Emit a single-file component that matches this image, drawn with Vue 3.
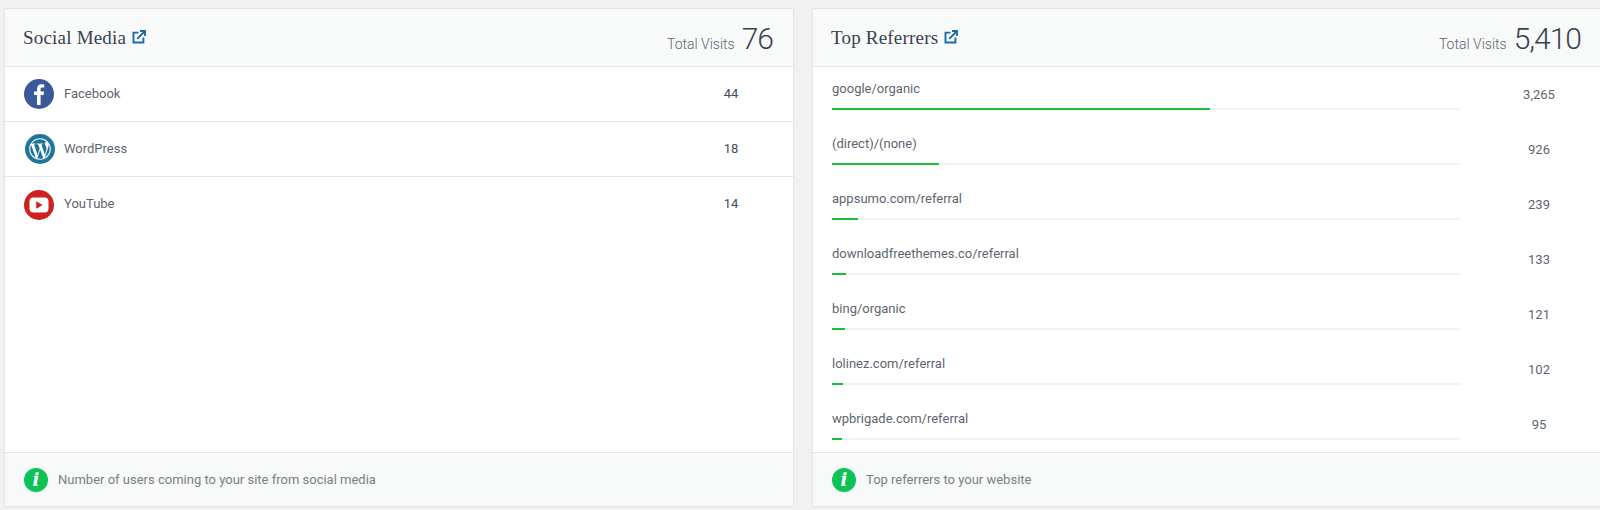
<template>
  <div class="page">
    <div class="card">
      <div class="card-head">
        <div class="title">
          <span>Social Media</span>
          <svg class="ext" viewBox="0 0 14 14" width="14" height="14">
            <path d="M6.5 2.6H1.5v9.9h9.9V7.5" fill="none" stroke="#1a6ca8" stroke-width="1.9" />
            <path d="M5.2 8.8 12 2M8 1h5v5" fill="none" stroke="#1a6ca8" stroke-width="1.9" />
          </svg>
        </div>
        <div class="total"><span class="total-label">Total Visits</span><span class="total-num">76</span></div>
      </div>
      <div class="card-body">
        <div class="social-row" v-for="s in socials" :key="s.name">
          <svg v-if="s.name === 'Facebook'" class="social-icon" viewBox="0 0 30 30" width="30" height="30">
            <circle cx="15" cy="15" r="15" fill="#3b5998" />
            <path d="M16.6 26v-10h3l.45-3.5H16.6v-2.2c0-1 .3-1.7 1.75-1.7h1.85V5.5c-.3 0-1.4-.15-2.7-.15-2.7 0-4.5 1.65-4.5 4.65v2.5H10v3.5h3v10z" fill="#fff" />
          </svg>
          <svg v-else-if="s.name === 'WordPress'" class="social-icon wp" viewBox="0 0 30 30" width="30" height="30">
            <circle cx="15" cy="15" r="15" fill="#21759b" />
            <path transform="translate(4.2 4.2) scale(.9)" fill="#fff" d="M21.469 6.825c.84 1.537 1.318 3.3 1.318 5.175 0 3.979-2.156 7.456-5.363 9.325l3.295-9.527c.615-1.54.82-2.771.82-3.864 0-.405-.026-.78-.07-1.11m-7.981.105c.647-.03 1.232-.105 1.232-.105.582-.075.514-.93-.067-.899 0 0-1.755.135-2.88.135-1.064 0-2.85-.15-2.85-.15-.585-.03-.661.855-.075.885 0 0 .54.061 1.125.09l1.68 4.605-2.37 7.08L5.354 6.9c.649-.03 1.234-.1 1.234-.1.585-.075.516-.93-.065-.896 0 0-1.746.138-2.874.138-.2 0-.438-.008-.69-.015C4.911 3.15 8.235 1.215 12 1.215c2.809 0 5.365 1.072 7.286 2.833-.046-.003-.091-.009-.141-.009-1.06 0-1.812.923-1.812 1.914 0 .89.513 1.643 1.06 2.531.411.72.89 1.643.89 2.977 0 .915-.354 1.994-.821 3.479l-1.075 3.585-3.9-11.61.001.014zM12 22.784c-1.059 0-2.081-.153-3.048-.437l3.237-9.406 3.315 9.087c.024.053.05.101.078.149-1.12.393-2.325.609-3.582.609M1.211 12c0-1.564.336-3.05.935-4.39L7.29 21.709C3.694 19.96 1.212 16.271 1.211 12M12 0C5.385 0 0 5.385 0 12s5.385 12 12 12 12-5.385 12-12S18.615 0 12 0" />
          </svg>
          <svg v-else class="social-icon" viewBox="0 0 30 30" width="30" height="30">
            <circle cx="15" cy="15" r="15" fill="#cd201f" />
            <rect x="5.5" y="7.5" width="19" height="15" rx="4" fill="#fff" />
            <path d="M12.2 11.2v7.6l6.4-3.8z" fill="#cd201f" />
          </svg>
          <span class="social-name">{{ s.name }}</span>
          <span class="social-num">{{ s.visits }}</span>
        </div>
      </div>
      <div class="card-foot">
        <span class="info"><i>i</i></span>
        Number of users coming to your site from social media
      </div>
    </div>

    <div class="card">
      <div class="card-head">
        <div class="title">
          <span>Top Referrers</span>
          <svg class="ext" viewBox="0 0 14 14" width="14" height="14">
            <path d="M6.5 2.6H1.5v9.9h9.9V7.5" fill="none" stroke="#1a6ca8" stroke-width="1.9" />
            <path d="M5.2 8.8 12 2M8 1h5v5" fill="none" stroke="#1a6ca8" stroke-width="1.9" />
          </svg>
        </div>
        <div class="total"><span class="total-label">Total Visits</span><span class="total-num">5,410</span></div>
      </div>
      <div class="card-body">
        <div class="ref-row" v-for="r in referrers" :key="r.name">
          <div class="ref-main">
            <div class="ref-name">{{ r.name }}</div>
            <div class="ref-track"><div class="ref-bar" :style="{ width: r.pct + '%' }"></div></div>
          </div>
          <div class="ref-num">{{ r.visits }}</div>
        </div>
      </div>
      <div class="card-foot">
        <span class="info"><i>i</i></span>
        Top referrers to your website
      </div>
    </div>
  </div>
</template>

<script setup>
const socials = [
  { name: "Facebook", visits: 44 },
  { name: "WordPress", visits: 18 },
  { name: "YouTube", visits: 14 },
];

const referrers = [
  { name: "google/organic", visits: "3,265", pct: 60.2 },
  { name: "(direct)/(none)", visits: "926", pct: 17.1 },
  { name: "appsumo.com/referral", visits: "239", pct: 4.2 },
  { name: "downloadfreethemes.co/referral", visits: "133", pct: 2.3 },
  { name: "bing/organic", visits: "121", pct: 2.1 },
  { name: "lolinez.com/referral", visits: "102", pct: 1.8 },
  { name: "wpbrigade.com/referral", visits: "95", pct: 1.6 },
];
</script>

<style>
html,
body {
  background: #f1f1f1;
  overflow: hidden;
}
</style>

<style scoped>
.page {
  display: flex;
  gap: 20px;
  height: 510px;
  box-sizing: border-box;
  padding: 9px 0 4px 5px;
  overflow: hidden;
  font-family: Roboto, sans-serif;
}
.card {
  flex: 0 0 788px;
  display: flex;
  flex-direction: column;
  background: #fff;
  box-shadow: 0 0 2px rgba(0, 0, 0, 0.15);
}
.card-head {
  height: 58px;
  flex: none;
  box-sizing: border-box;
  border-bottom: 1px solid #e3e6e8;
  background: #f8f9f9;
  display: flex;
  justify-content: space-between;
  padding: 0 20px 0 18px;
}
.title {
  display: flex;
  align-items: center;
  height: 56px;
  padding-top: 2px;
  box-sizing: border-box;
  font-family: "Liberation Serif", serif;
  font-size: 19px;
  letter-spacing: 0.2px;
  color: #3a4250;
}
.ext {
  margin-left: 6px;
  margin-bottom: 2px;
}
.total {
  display: flex;
  align-items: baseline;
  padding-top: 12px;
}
.total-label {
  font-size: 14px;
  font-weight: 300;
  color: #60656d;
  margin-right: 7px;
}
.total-num {
  font-size: 30px;
  font-weight: 300;
  letter-spacing: -1px;
  color: #3a4250;
}
.card-body {
  flex: 1;
  overflow: hidden;
}
.social-row {
  height: 55px;
  box-sizing: border-box;
  display: flex;
  align-items: center;
  padding-left: 19px;
  border-bottom: 1px solid #e3e6e8;
}
.social-row:last-child {
  border-bottom: 0;
}
.social-icon {
  flex: none;
  margin-right: 10px;
}
.wp {
  margin-left: 1px;
  margin-right: 9px;
}
.social-name {
  flex: 1;
  padding-bottom: 2px;
  font-size: 13px;
  color: #5e6570;
}
.social-num {
  width: 124px;
  padding-bottom: 2px;
  text-align: center;
  font-size: 13px;
  color: #444b55;
}
.ref-row {
  height: 55px;
  display: flex;
  gap: 17px;
  padding-left: 19px;
}
.ref-main {
  flex: 1;
  padding-top: 14px;
}
.ref-name {
  font-size: 13px;
  line-height: 15px;
  color: #5e6570;
}
.ref-track {
  margin-top: 12px;
  height: 2px;
  background: #f1f3f3;
}
.ref-bar {
  height: 2px;
  background: #1dbf3a;
}
.ref-num {
  width: 124px;
  text-align: center;
  padding-top: 20px;
  font-size: 13px;
  line-height: 15px;
  color: #5e6570;
}
.card-foot {
  height: 54px;
  flex: none;
  box-sizing: border-box;
  border-top: 1px solid #e3e6e8;
  background: #f8f9f9;
  display: flex;
  align-items: center;
  padding-left: 19px;
  font-size: 13px;
  color: #7a7f87;
}
.info {
  width: 24px;
  height: 24px;
  border-radius: 50%;
  background: #0ec254;
  display: flex;
  align-items: center;
  justify-content: center;
  margin-right: 10px;
  color: #fff;
}
.info i {
  font-family: "DejaVu Serif", serif;
  font-weight: 700;
  font-size: 18px;
}
</style>
